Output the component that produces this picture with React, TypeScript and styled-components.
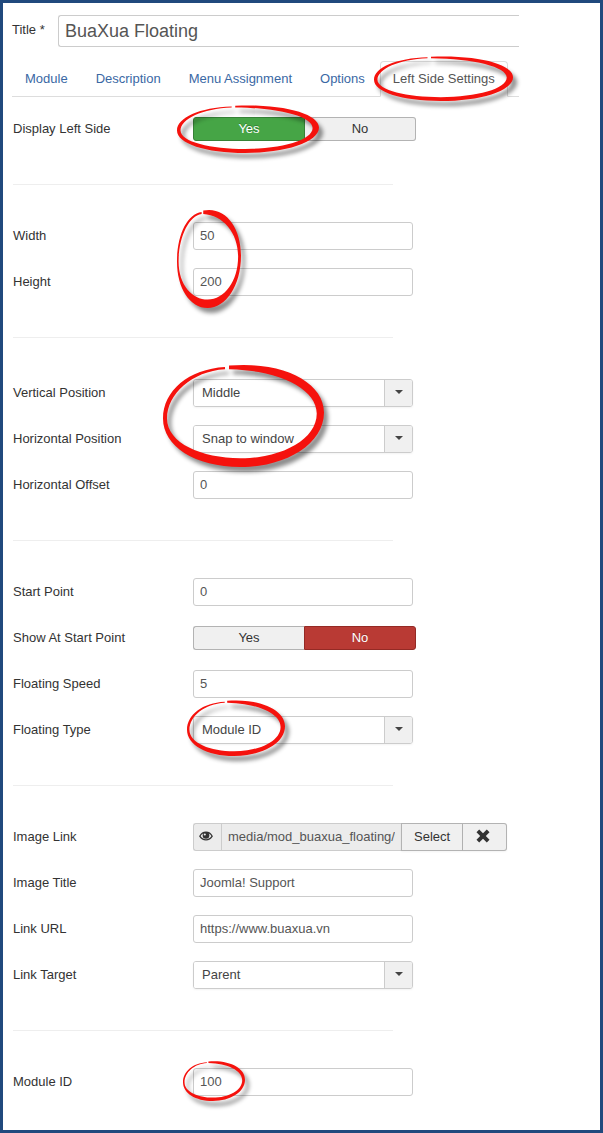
import React, { useState } from "react";
import styled, { createGlobalStyle, css } from "styled-components";

const GlobalStyle = createGlobalStyle`
  *, *::before, *::after { box-sizing: border-box; }
  body {
    margin: 0;
    background: #fff;
    color: #333;
    font: 13px/18px "Liberation Sans", Arial, sans-serif;
  }
  input, select, button { font: inherit; margin: 0; }
`;

const Page = styled.main`
  border: 3px solid #20497d;
  padding: 12px 9px 34px;
`;

const Header = styled.header`
  padding-right: 72px;
`;

const TitleRow = styled.div`
  display: flex;
  align-items: center;
`;

const TitleLabel = styled.label`
  flex: 0 0 46px;
  padding-bottom: 2px;
`;

const TitleInput = styled.input`
  flex: 1;
  min-width: 0;
  height: 32px;
  padding: 0 6px;
  border: 1px solid #ccc;
  border-right: 0;
  border-radius: 3px 0 0 3px;
  font-size: 18px;
  color: #555;
  background: #fff;
`;

const Tabs = styled.ul`
  display: flex;
  margin: 14px 0 18px;
  padding: 0;
  list-style: none;
  border-bottom: 1px solid #ddd;
`;

const TabItem = styled.li`
  position: relative;
  margin: 0 2px -1px 0;
`;

const TabLink = styled.a<{ $active?: boolean }>`
  display: block;
  padding: 8px 12px;
  border: 1px solid transparent;
  border-radius: 4px 4px 0 0;
  line-height: 18px;
  white-space: nowrap;
  text-decoration: none;
  color: #3a68a4;
  ${(p) =>
    p.$active &&
    css`
      color: #555;
      background: #fff;
      border-color: #ddd #ddd #fff;
    `}
`;

const Form = styled.form`
  padding-left: 1px;
`;

const Divider = styled.hr<{ $roomy?: boolean }>`
  max-width: 380px;
  margin: 41px 0 ${(p) => (p.$roomy ? 41 : 37)}px;
  border: 0;
  border-top: 1px solid #eee;
`;

const Group = styled.div`
  display: grid;
  gap: 18px;
`;

const Row = styled.div`
  display: flex;
  align-items: center;
  height: 28px;
`;

const rowLabel = css`
  flex: 0 0 180px;
`;
const RowLabel = styled.label`
  ${rowLabel}
`;
const RowCaption = styled.span`
  ${rowLabel}
`;

const Control = styled.div`
  position: relative;
  flex: 1;
  min-width: 0;
  min-height: 28px;
  display: flex;
  align-items: center;
`;

const TextInput = styled.input`
  width: 100%;
  max-width: 220px;
  height: 28px;
  padding: 0 6px 2px;
  border: 1px solid #ccc;
  border-radius: 3px;
  color: #555;
  background: #fff;
`;

const SelectBox = styled.div`
  display: flex;
  width: 100%;
  max-width: 220px;
  height: 28px;
  border: 1px solid #ccc;
  border-radius: 3px;
  overflow: hidden;
  box-shadow: 0 1px 2px rgba(0, 0, 0, 0.05);
`;

const Select = styled.select`
  flex: 1;
  min-width: 0;
  padding: 0 8px;
  border: 0;
  appearance: none;
  color: #444;
  background: #fff;
`;

const SelectArrow = styled.span`
  display: flex;
  align-items: center;
  justify-content: center;
  flex: 0 0 28px;
  padding-bottom: 2px;
  border-left: 1px solid #ccc;
  background: #f0f0f0;
  &::after {
    content: "";
    border: 4px solid transparent;
    border-top-color: #444;
    border-bottom: 0;
  }
`;

const Switch = styled.div`
  display: flex;
  width: 100%;
  max-width: 223px;
`;

const tones = {
  off: css`
    color: #333;
    background: #f0f0f0;
    border-color: #b3b3b3;
  `,
  yes: css`
    color: #fff;
    background: #46a546;
    border-color: #378137;
    text-shadow: 0 -1px 0 rgba(0, 0, 0, 0.25);
  `,
  no: css`
    color: #fff;
    background: #b93a34;
    border-color: #942a25;
    text-shadow: 0 -1px 0 rgba(0, 0, 0, 0.25);
  `,
};

const SwitchOption = styled.label<{ $tone: keyof typeof tones }>`
  flex: 1;
  height: 24px;
  line-height: 22px;
  text-align: center;
  border: 1px solid;
  ${(p) => tones[p.$tone]}
  &:first-child {
    border-radius: 3px 0 0 3px;
    border-right-width: ${(p) => (p.$tone === "off" ? 0 : 1)}px;
  }
  &:last-child {
    border-radius: 0 3px 3px 0;
    border-left-width: ${(p) => (p.$tone === "off" ? 0 : 1)}px;
  }
`;

const HiddenRadio = styled.input`
  position: absolute;
  opacity: 0;
  pointer-events: none;
`;

const MediaGroup = styled.div`
  display: flex;
  height: 28px;
`;

const MediaIcon = styled.span`
  display: flex;
  align-items: center;
  justify-content: center;
  width: 28px;
  padding-bottom: 2px;
  border: 1px solid #ccc;
  border-right: 0;
  border-radius: 3px 0 0 3px;
  background: #ececec;
`;

const MediaPath = styled.input`
  width: 180px;
  padding: 0 6px;
  border: 1px solid #ccc;
  border-right: 0;
  border-radius: 0;
  color: #555;
  background: #ececec;
`;

const MediaButton = styled.button`
  display: flex;
  align-items: center;
  justify-content: center;
  padding: 0 12px;
  border: 1px solid #b3b3b3;
  color: #333;
  background: #f0f0f0;
  box-shadow: 0 1px 2px rgba(0, 0, 0, 0.05);
  & + & {
    padding: 0 13px 2px;
    border-left: 0;
    border-radius: 0 3px 3px 0;
  }
`;

const Icon = styled.svg`
  flex: none;
  margin-right: 3px;
`;

interface RingBox {
  x: number;
  y: number;
  w: number;
  h: number;
}

const RingSvg = styled.svg<{ $box: RingBox }>`
  position: absolute;
  z-index: 2;
  left: ${(p) => p.$box.x}px;
  top: ${(p) => p.$box.y}px;
  width: ${(p) => p.$box.w}px;
  height: ${(p) => p.$box.h}px;
  overflow: visible;
  pointer-events: none;
  filter: drop-shadow(4px 5px 2px rgba(0, 0, 0, 0.45));
`;

/* Brush-like red ring, open at the top, drawn over the item it highlights. */
function Ring({ box }: { box: RingBox }) {
  return (
    <RingSvg $box={box} viewBox="0 0 100 100" preserveAspectRatio="none" aria-hidden="true">
      <path
        fill="#f5120d"
        d="M41 1.5C75 -3 100 18 100 47C100 78 76 100 48 100C20 100 0 80 0 53C0 26 16 5 38.5 3L38.5 5C18 7 2.5 29 2.5 53C2.5 77 24 91.500 48 91.500C74 91.500 95.500 73 95.500 48C95.500 24 72 6 41 5Z"
      />
    </RingSvg>
  );
}

function TextField({ id, label, value, ring }: { id: string; label: string; value: string; ring?: RingBox }) {
  return (
    <Row>
      <RowLabel htmlFor={id}>{label}</RowLabel>
      <Control>
        <TextInput id={id} type="text" defaultValue={value} />
        {ring && <Ring box={ring} />}
      </Control>
    </Row>
  );
}

function SelectField({ id, label, value, ring }: { id: string; label: string; value: string; ring?: RingBox }) {
  return (
    <Row>
      <RowLabel htmlFor={id}>{label}</RowLabel>
      <Control>
        <SelectBox>
          <Select id={id} defaultValue={value}>
            <option>{value}</option>
          </Select>
          <SelectArrow />
        </SelectBox>
        {ring && <Ring box={ring} />}
      </Control>
    </Row>
  );
}

function SwitchField({ id, label, initial, ring }: { id: string; label: string; initial: "yes" | "no"; ring?: RingBox }) {
  const [value, setValue] = useState(initial);
  return (
    <Row>
      <RowCaption id={id}>{label}</RowCaption>
      <Control>
        <Switch role="radiogroup" aria-labelledby={id}>
          {(["yes", "no"] as const).map((option) => (
            <SwitchOption key={option} $tone={value === option ? option : "off"}>
              <HiddenRadio type="radio" name={id} checked={value === option} onChange={() => setValue(option)} />
              {option === "yes" ? "Yes" : "No"}
            </SwitchOption>
          ))}
        </Switch>
        {ring && <Ring box={ring} />}
      </Control>
    </Row>
  );
}

function EyeIcon() {
  return (
    <Icon width="14" height="10" viewBox="0 0 14 10" aria-hidden="true">
      <path
        fill="none"
        stroke="#333"
        strokeWidth="1.3"
        d="M.8 5.2C2.300 2.500 4.500 1.200 7 1.200S11.700 2.500 13.200 5.200C11.700 7.700 9.500 8.900 7 8.900S2.300 7.700 .8 5.200Z"
      />
      <circle cx="7" cy="4.400" r="3.300" fill="#333" />
      <circle cx="5.800" cy="3.500" r="1.100" fill="#ececec" />
    </Icon>
  );
}

function CrossIcon() {
  return (
    <Icon width="14" height="14" viewBox="0 0 14 14" aria-hidden="true">
      <path
        fill="#333"
        d="M3.200 .5L7 4.200L10.800 .5L13.500 3.200L9.800 7L13.500 10.800L10.800 13.500L7 9.800L3.200 13.500L.5 10.800L4.200 7L.5 3.200Z"
      />
    </Icon>
  );
}

const tabs = ["Module", "Description", "Menu Assignment", "Options", "Left Side Settings"];

export default function App() {
  return (
    <>
      <GlobalStyle />
      <Page>
        <Header>
          <TitleRow>
            <TitleLabel htmlFor="title">Title *</TitleLabel>
            <TitleInput id="title" type="text" defaultValue="BuaXua Floating" />
          </TitleRow>
          <nav>
            <Tabs>
              {tabs.map((tab) => {
                const active = tab === "Left Side Settings";
                return (
                  <TabItem key={tab}>
                    <TabLink href="#" $active={active} aria-current={active ? "page" : undefined}>
                      {tab}
                    </TabLink>
                    {active && <Ring box={{ x: -6, y: -5, w: 139, h: 45 }} />}
                  </TabItem>
                );
              })}
            </Tabs>
          </nav>
        </Header>
        <Form>
          <Group>
            <SwitchField id="display" label="Display Left Side" initial="yes" ring={{ x: -16, y: -10, w: 142, h: 48 }} />
          </Group>
          <Divider />
          <Group>
            <TextField id="width" label="Width" value="50" ring={{ x: -16, y: -13, w: 64, h: 99 }} />
            <TextField id="height" label="Height" value="200" />
          </Group>
          <Divider $roomy />
          <Group>
            <SelectField id="vertical" label="Vertical Position" value="Middle" ring={{ x: -30, y: -15, w: 161, h: 103 }} />
            <SelectField id="horizontal" label="Horizontal Position" value="Snap to window" />
            <TextField id="offset" label="Horizontal Offset" value="0" />
          </Group>
          <Divider />
          <Group>
            <TextField id="start" label="Start Point" value="0" />
            <SwitchField id="show-start" label="Show At Start Point" initial="no" />
            <TextField id="speed" label="Floating Speed" value="5" />
            <SelectField id="type" label="Floating Type" value="Module ID" ring={{ x: -6, y: -16, w: 98, h: 56 }} />
          </Group>
          <Divider />
          <Group>
            <Row>
              <RowLabel htmlFor="image">Image Link</RowLabel>
              <Control>
                <MediaGroup>
                  <MediaIcon>
                    <EyeIcon />
                  </MediaIcon>
                  <MediaPath id="image" type="text" readOnly value="media/mod_buaxua_floating/" />
                  <MediaButton type="button">Select</MediaButton>
                  <MediaButton type="button" aria-label="Clear">
                    <CrossIcon />
                  </MediaButton>
                </MediaGroup>
              </Control>
            </Row>
            <TextField id="image-title" label="Image Title" value="Joomla! Support" />
            <TextField id="url" label="Link URL" value="https://www.buaxua.vn" />
            <SelectField id="target" label="Link Target" value="Parent" />
          </Group>
          <Divider />
          <Group>
            <TextField id="module-id" label="Module ID" value="100" ring={{ x: -10, y: -7, w: 62, h: 40 }} />
          </Group>
        </Form>
      </Page>
    </>
  );
}
